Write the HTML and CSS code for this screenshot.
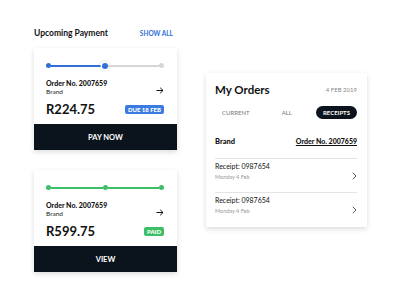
FILE: index.html
```html
<!DOCTYPE html>
<html lang="en">
<head>
  <meta charset="UTF-8" />
  <title>Payments</title>
  <link rel="stylesheet" href="styles.css">
</head>
<body>
  <div class="page">
    <div class="payments">
      <div class="payments-head">
        <h2>Upcoming Payment</h2>
        <a href="#" class="show-all">SHOW ALL</a>
      </div>

      <div class="card">
        <div class="card-body">
          <div class="progress blue">
            <span class="dot"></span>
            <span class="line"></span>
            <span class="dot current"></span>
            <span class="line off"></span>
            <span class="dot off"></span>
          </div>
          <div class="order-row">
            <div>
              <div class="order-no">Order No. 2007659</div>
              <div class="brand">Brand</div>
            </div>
            <svg class="arrow" width="8" height="7" viewBox="0 0 8 7"><path d="M0.5 3.5H7M4.2 0.8L7 3.5L4.2 6.2" fill="none" stroke="#111" stroke-width="1"/></svg>
          </div>
          <div class="price-row">
            <span class="price">R224.75</span>
            <span class="badge due">DUE 18 FEB</span>
          </div>
        </div>
        <button>PAY NOW</button>
      </div>

      <div class="card">
        <div class="card-body">
          <div class="progress green">
            <span class="dot"></span>
            <span class="line"></span>
            <span class="dot"></span>
            <span class="line"></span>
            <span class="dot"></span>
          </div>
          <div class="order-row">
            <div>
              <div class="order-no">Order No. 2007659</div>
              <div class="brand">Brand</div>
            </div>
            <svg class="arrow" width="8" height="7" viewBox="0 0 8 7"><path d="M0.5 3.5H7M4.2 0.8L7 3.5L4.2 6.2" fill="none" stroke="#111" stroke-width="1"/></svg>
          </div>
          <div class="price-row">
            <span class="price">R599.75</span>
            <span class="badge paid">PAID</span>
          </div>
        </div>
        <button>VIEW</button>
      </div>
    </div>

    <div class="orders">
      <div class="orders-head">
        <h1>My Orders</h1>
        <span class="date">4 FEB 2019</span>
      </div>
      <div class="tabs">
        <span class="tab">CURRENT</span>
        <span class="tab">ALL</span>
        <span class="tab active">RECEIPTS</span>
      </div>
      <div class="orders-brand">
        <span>Brand</span>
        <a href="#">Order No. 2007659</a>
      </div>
      <div class="receipt">
        <div>
          <div class="receipt-no">Receipt: 0987654</div>
          <div class="receipt-date">Monday 4 Feb</div>
        </div>
        <svg width="5" height="8" viewBox="0 0 5 8"><path d="M0.8 0.8L4 4L0.8 7.2" fill="none" stroke="#555" stroke-width="1"/></svg>
      </div>
      <div class="receipt">
        <div>
          <div class="receipt-no">Receipt: 0987654</div>
          <div class="receipt-date">Monday 4 Feb</div>
        </div>
        <svg width="5" height="8" viewBox="0 0 5 8"><path d="M0.8 0.8L4 4L0.8 7.2" fill="none" stroke="#555" stroke-width="1"/></svg>
      </div>
    </div>
  </div>
</body>
</html>
```

FILE: styles.css
```css
body {
  font-family: 'Lato', 'Liberation Sans', sans-serif;
  background: #fff;
  color: #111;
  margin: 0;
  padding: 0;
}
.page {
  display: flex;
  align-items: flex-start;
  padding-left: 34px;
}
.payments {
  width: 143px;
  padding-top: 26px;
}
.payments-head {
  display: flex;
  justify-content: space-between;
  align-items: center;
  height: 14px;
  margin-bottom: 8px;
}
.payments-head h2 {
  margin: 0;
  font-size: 8.5px;
  font-weight: 700;
}
.show-all {
  color: #2f6fd6;
  font-size: 6.5px;
  font-weight: 700;
  text-decoration: none;
  margin-right: 4px;
}
.card {
  background: white;
  box-shadow: 0 2px 5px rgba(0, 0, 0, 0.14);
  margin-bottom: 20px;
}
.card-body {
  padding: 14px 13px 7px 12px;
}
.progress {
  display: flex;
  align-items: center;
  height: 7px;
}
.progress .dot {
  width: 5px;
  height: 5px;
  border-radius: 50%;
  flex: none;
}
.progress .line {
  flex: 1;
  height: 2px;
}
.blue .dot, .blue .line {
  background: #2f6fd6;
}
.green .dot, .green .line {
  background: #3cbf67;
}
.progress .dot.current {
  width: 6px;
  height: 6px;
  box-shadow: 0 0 0 1.5px #fff, 0 0 3px 2px rgba(0, 0, 0, 0.12);
}
.progress .off {
  background: #d6d6d6 !important;
}
.order-row {
  display: flex;
  justify-content: space-between;
  align-items: center;
  margin-top: 9px;
}
.order-no {
  font-size: 7px;
  font-weight: 900;
  line-height: 10px;
}
.brand {
  font-size: 6.5px;
  line-height: 8px;
  color: #222;
}
.arrow {
  margin-top: 6px;
}
.price-row {
  display: flex;
  justify-content: space-between;
  align-items: center;
  margin-top: 5px;
  height: 16px;
}
.price {
  font-size: 13px;
  font-weight: 700;
}
.badge {
  color: white;
  font-size: 6px;
  font-weight: 900;
  padding: 1px 3px;
  border-radius: 2px;
  line-height: 7px;
}
.badge.due {
  background: #3a7be0;
}
.badge.paid {
  background: #3cbf67;
}
button {
  display: block;
  width: 100%;
  height: 26px;
  border: none;
  background: #0b131d;
  color: white;
  font-family: inherit;
  font-size: 7.5px;
  font-weight: 700;
  padding: 0;
}
.orders {
  margin-left: 29px;
  margin-top: 73px;
  width: 161px;
  box-sizing: border-box;
  padding: 7px 10px 0 9px;
  background: white;
  box-shadow: 0 2px 5px rgba(0, 0, 0, 0.14);
}
.orders-head {
  display: flex;
  justify-content: space-between;
  align-items: center;
  height: 18px;
}
.orders-head h1 {
  margin: 0;
  font-size: 11.5px;
  font-weight: 700;
}
.date {
  font-size: 6px;
  color: #888;
}
.tabs {
  display: flex;
  justify-content: space-between;
  align-items: center;
  height: 13px;
  margin-top: 8px;
  padding-left: 7px;
}
.tab {
  font-size: 6px;
  color: #777;
}
.tab:nth-child(2) {
  margin-left: 8px;
}
.tab.active {
  background: #0b131d;
  color: white;
  font-weight: 700;
  border-radius: 7px;
  padding: 0 7px;
  line-height: 13px;
}
.orders-brand {
  display: flex;
  justify-content: space-between;
  align-items: center;
  height: 12px;
  margin-top: 16px;
  margin-bottom: 11px;
  font-size: 7.5px;
  font-weight: 900;
}
.orders-brand a {
  color: #111;
  font-size: 7px;
  text-decoration: underline;
}
.receipt {
  display: flex;
  justify-content: space-between;
  align-items: center;
  border-top: 1px solid #e4e4e4;
  padding: 2px 0 11px;
}
.receipt:last-child {
  padding-bottom: 12px;
}
.receipt svg {
  margin-top: 10px;
}
.receipt-no {
  font-size: 7px;
  line-height: 10px;
}
.receipt-date {
  font-size: 5.5px;
  color: #999;
  line-height: 8px;
  margin-top: 2px;
}
```
